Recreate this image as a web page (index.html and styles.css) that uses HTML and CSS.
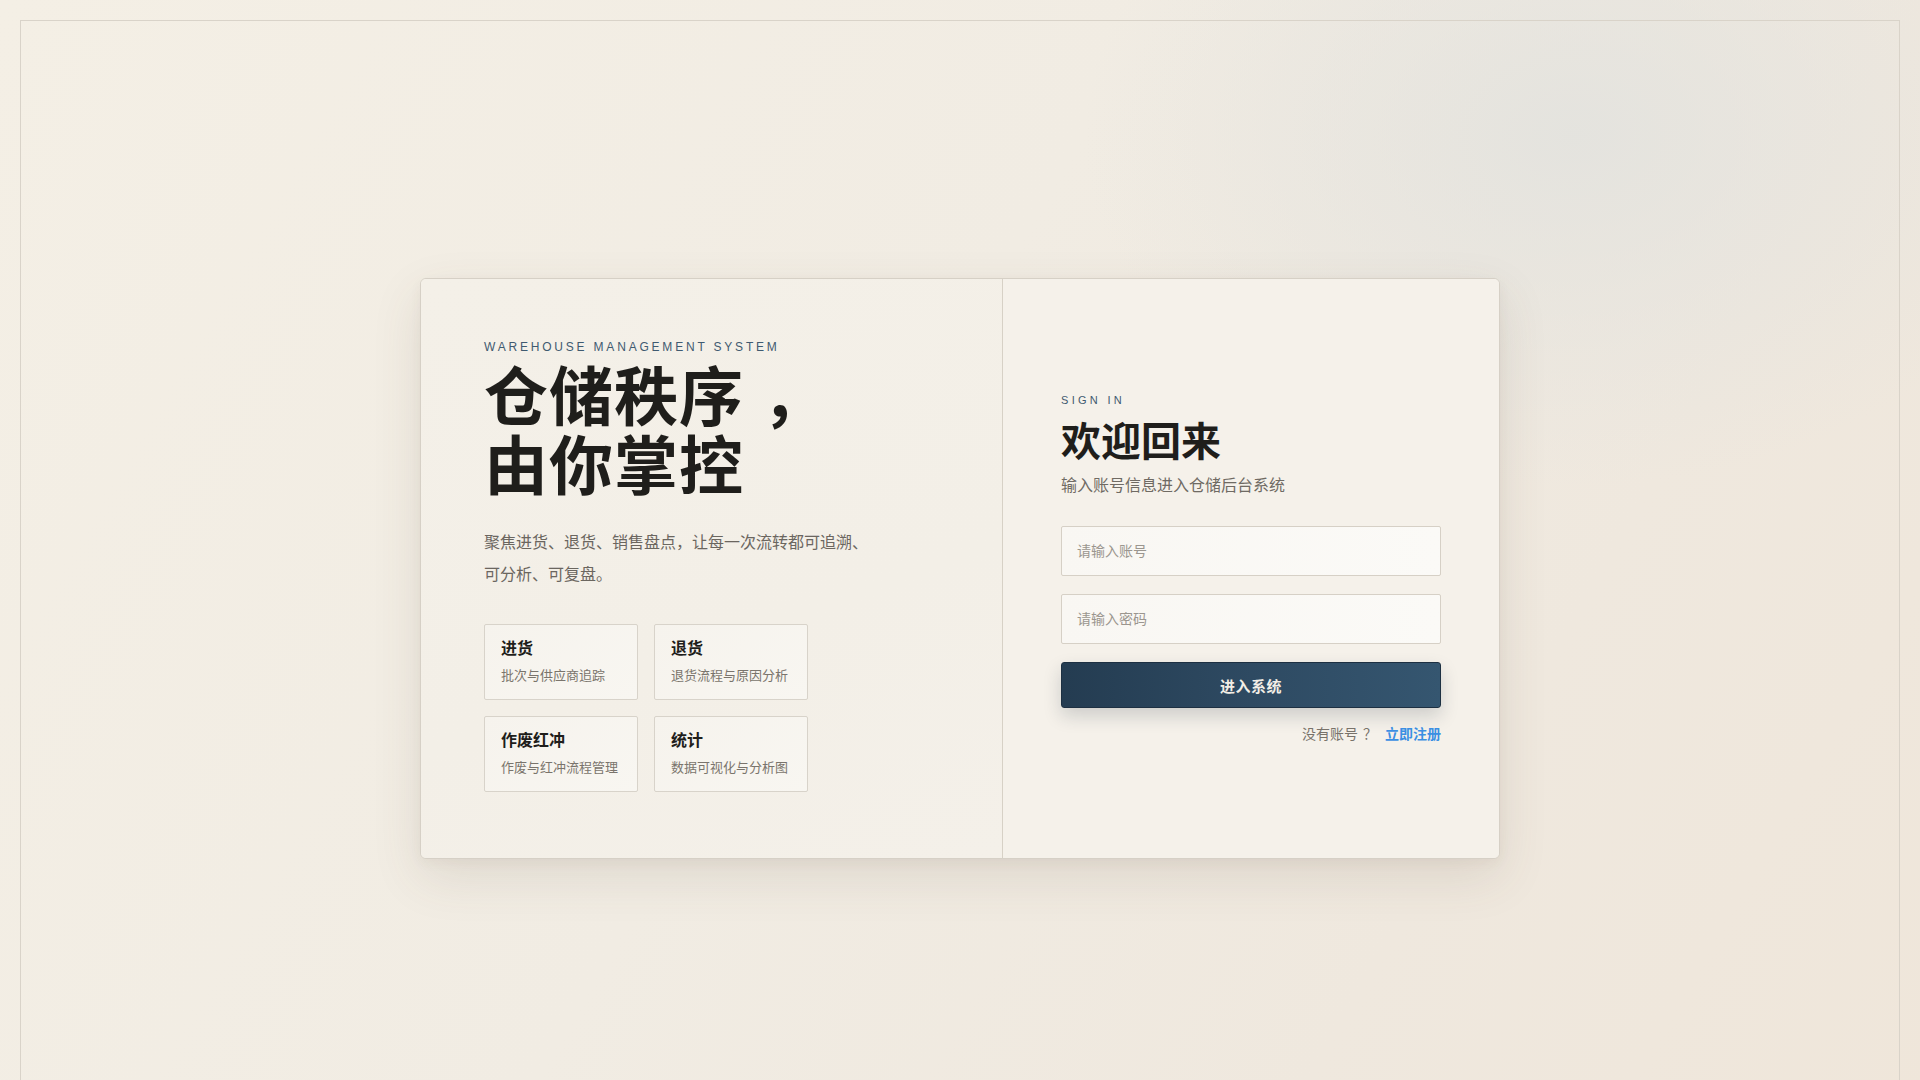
FILE: index.html
```html
<!DOCTYPE html>
<html lang="zh-CN">
<head>
<meta charset="utf-8">
<title>仓储管理系统 - 登录</title>
<link rel="stylesheet" href="styles.css">
</head>
<body>
<div class="frame">
  <main class="card">
    <section class="intro">
      <div class="eyebrow">WAREHOUSE MANAGEMENT SYSTEM</div>
      <h1 class="headline">仓储秩序<span class="punct">，</span><br>由你掌控</h1>
      <p class="lead">聚焦进货、退货、销售盘点，让每一次流转都可追溯、可分析、可复盘。</p>
      <div class="features">
        <div class="feature">
          <div class="feature-title">进货</div>
          <div class="feature-desc">批次与供应商追踪</div>
        </div>
        <div class="feature">
          <div class="feature-title">退货</div>
          <div class="feature-desc">退货流程与原因分析</div>
        </div>
        <div class="feature">
          <div class="feature-title">作废红冲</div>
          <div class="feature-desc">作废与红冲流程管理</div>
        </div>
        <div class="feature">
          <div class="feature-title">统计</div>
          <div class="feature-desc">数据可视化与分析图</div>
        </div>
      </div>
    </section>
    <section class="signin">
      <div class="signin-inner">
        <div class="eyebrow eyebrow-sm">SIGN IN</div>
        <h2 class="welcome">欢迎回来</h2>
        <p class="subtitle">输入账号信息进入仓储后台系统</p>
        <form class="form">
          <input class="field" type="text" placeholder="请输入账号">
          <input class="field" type="password" placeholder="请输入密码">
          <button class="submit" type="button">进入系统</button>
        </form>
        <div class="register">
          <span class="register-q">没有账号<span class="punct">？</span></span>
          <a class="register-link" href="#">立即注册</a>
        </div>
      </div>
    </section>
  </main>
</div>
</body>
</html>
```
FILE: styles.css
```css
* {
  box-sizing: border-box;
}

html, body {
  margin: 0;
  padding: 0;
}

body {
  font-family: "Liberation Sans", "Noto Sans CJK SC", sans-serif;
  color: #1f1e1b;
  background:
    radial-gradient(ellipse 700px 500px at 82% 12%, rgba(226, 226, 222, 0.85), rgba(226, 226, 222, 0) 70%),
    linear-gradient(120deg, #f4efe5 0%, #f1ece3 45%, #efe8de 75%, #efe6da 100%);
  min-height: 100vh;
  padding: 20px;
}

.frame {
  border: 1px solid #d9d3c9;
  min-height: 1096px;
  display: flex;
  align-items: center;
  justify-content: center;
}

.card {
  width: 1080px;
  display: grid;
  grid-template-columns: 582px 1fr;
  background: #f4f0e8;
  border: 1px solid #d6d0c6;
  border-radius: 6px;
  box-shadow: 0 18px 50px rgba(90, 75, 55, 0.12), 0 4px 12px rgba(90, 75, 55, 0.05);
  overflow: hidden;
}

.intro {
  padding: 60px 64px 66px 63px;
  border-right: 1px solid #d7d1c6;
  background: linear-gradient(160deg, #f4f0e8 0%, #f3efe7 60%, #f4f0e9 100%);
}

/* full-width punctuation sits towards the middle of its cell, as in the original;
   the negative letter-spacing gives back the padding so the advance stays put */
.punct {
  padding-left: 0.3em;
  letter-spacing: -0.3em;
}

.headline .punct {
  padding-left: 0.28em;
  letter-spacing: -0.28em;
}

.register .punct {
  padding-left: 0.35em;
  letter-spacing: -0.35em;
}

.eyebrow {
  font-size: 12px;
  line-height: 16px;
  letter-spacing: 2.8px;
  color: #3f5a70;
  margin-bottom: 9px;
}

.headline {
  margin: 0;
  font-size: 64px;
  line-height: 69px;
  font-weight: 700;
  letter-spacing: 1px;
  color: #1f1e1b;
}

.lead {
  margin: 25px 0 0;
  max-width: 392px;
  font-size: 16px;
  line-height: 32px;
  color: #6b665f;
}

.features {
  margin-top: 33px;
  display: grid;
  grid-template-columns: repeat(2, 154px);
  gap: 16px;
}

.feature {
  border: 1px solid #d8d3ca;
  border-radius: 2px;
  background: linear-gradient(135deg, #f6f3ed 0%, #f8f6f1 100%);
  padding: 13px 16px 13px;
}

.feature-title {
  font-size: 16px;
  line-height: 22px;
  font-weight: 700;
  color: #1f1e1b;
  margin-bottom: 6px;
}

.feature-desc {
  font-size: 13px;
  line-height: 20px;
  color: #7a746c;
  white-space: nowrap;
}

.signin {
  display: flex;
  align-items: center;
  justify-content: center;
  background: #f5f1ea;
}

.signin-inner {
  width: 380px;
}

.signin .eyebrow-sm {
  font-size: 11px;
  letter-spacing: 3.3px;
  margin-bottom: 10px;
}

.welcome {
  margin: 0;
  font-size: 40px;
  line-height: 48px;
  font-weight: 700;
  color: #1f1e1b;
}

.subtitle {
  margin: 8px 0 0;
  font-size: 16px;
  line-height: 24px;
  color: #6f6a63;
}

.form {
  margin-top: 28px;
  display: flex;
  flex-direction: column;
  gap: 18px;
}

.field {
  height: 50px;
  width: 100%;
  border: 1px solid #d6d0c6;
  border-radius: 2px;
  background: linear-gradient(90deg, #f9f7f3 0%, #fbfaf7 100%);
  padding: 0 15px;
  font-family: "Liberation Sans", "Noto Sans CJK SC", sans-serif;
  font-size: 14px;
  color: #1f1e1b;
  outline: none;
}

.field::placeholder {
  color: #9b968f;
}

.submit {
  height: 46px;
  width: 100%;
  border: 1px solid #1d3042;
  border-radius: 3px;
  background: linear-gradient(90deg, #243c51 0%, #2e4a62 50%, #355670 100%);
  color: #f2eee6;
  font-family: "Liberation Sans", "Noto Sans CJK SC", sans-serif;
  font-size: 15px;
  font-weight: 700;
  letter-spacing: 0.5px;
  box-shadow: 0 8px 18px rgba(30, 45, 60, 0.18);
  cursor: pointer;
}

.register {
  margin-top: 16px;
  display: flex;
  justify-content: flex-end;
  align-items: center;
  gap: 13px;
  font-size: 14px;
  line-height: 20px;
}

.register-q {
  color: #78726a;
}

.register-link {
  color: #3b8fe3;
  font-weight: 700;
  text-decoration: none;
}
```
